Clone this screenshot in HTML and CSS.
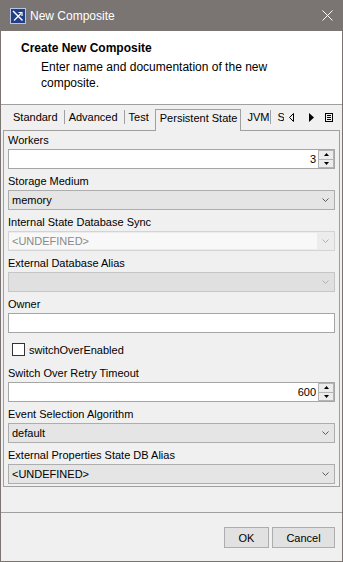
FILE: index.html
```html
<!DOCTYPE html>
<html lang="en">
  <head>
    <meta charset="UTF-8" />
    <meta name="viewport" content="width=device-width, initial-scale=1.0" />
    <title>New Composite</title>
    <link rel="stylesheet" href="styles.css">
  </head>
  <body>
    <div class="window">
      <div class="titlebar">
        <svg class="app-icon" width="16" height="16" viewBox="0 0 16 16">
          <rect x="0.5" y="0.5" width="15" height="15" fill="#213f86" stroke="#b9c5e2" />
          <path d="M3 3L12.5 12.5" stroke="#fff" stroke-width="1.4" />
          <path d="M4 12.5L11 5.5" stroke="#fff" stroke-width="1.2" />
          <path d="M8.5 4.5H12V8" fill="none" stroke="#fff" stroke-width="1.2" />
        </svg>
        <span class="title">New Composite</span>
        <svg class="close" width="11" height="11" viewBox="0 0 11 11">
          <path d="M0.5 0.5L10.5 10.5M10.5 0.5L0.5 10.5" stroke="#fff" stroke-width="1" />
        </svg>
      </div>

      <div class="header">
        <h1>Create New Composite</h1>
        <p>Enter name and documentation of the new composite.</p>
      </div>

      <div class="content">
        <div class="tabs">
          <div class="tab-list">
            <span class="tab">Standard</span>
            <span class="sep"></span>
            <span class="tab">Advanced</span>
            <span class="sep"></span>
            <span class="tab">Test</span>
            <span class="tab selected">Persistent State</span>
            <span class="tab tab-jvm">JVM</span>
            <span class="sep"></span>
            <span class="tab tab-cut">S</span>
          </div>
          <div class="tab-controls">
            <svg width="5" height="9" viewBox="0 0 5 9">
              <path d="M4.5 0.5V8.5L0.5 4.5Z" fill="none" stroke="#000" />
            </svg>
            <svg class="next" width="5" height="9" viewBox="0 0 5 9">
              <path d="M0 0V9L5 4.5Z" fill="#000" />
            </svg>
            <svg class="menu" width="8" height="9" viewBox="0 0 8 9">
              <rect x="0.5" y="0.5" width="7" height="8" fill="none" stroke="#000" />
              <path d="M2 2.5H6M2 4.5H6M2 6.5H6" stroke="#000" />
            </svg>
          </div>
        </div>

        <div class="panel">
          <div class="field">
            <label>Workers</label>
            <div class="spin">
              <span class="value">3</span>
              <div class="spin-buttons">
                <span class="spin-btn"><svg width="5" height="3" viewBox="0 0 5 3"><path d="M0 3H5L2.5 0Z" /></svg></span>
                <span class="spin-btn"><svg width="5" height="3" viewBox="0 0 5 3"><path d="M0 0H5L2.5 3Z" /></svg></span>
              </div>
            </div>
          </div>

          <div class="field">
            <label>Storage Medium</label>
            <div class="combo">
              <span class="combo-text">memory</span>
              <span class="arrow"><svg width="7" height="4" viewBox="0 0 7 4"><path d="M0.5 0.5L3.5 3.5L6.5 0.5" /></svg></span>
            </div>
          </div>

          <div class="field">
            <label>Internal State Database Sync</label>
            <div class="combo disabled">
              <span class="combo-text">&lt;UNDEFINED&gt;</span>
              <span class="arrow"><svg width="7" height="4" viewBox="0 0 7 4"><path d="M0.5 0.5L3.5 3.5L6.5 0.5" /></svg></span>
            </div>
          </div>

          <div class="field">
            <label>External Database Alias</label>
            <div class="combo empty">
              <span class="combo-text"></span>
              <span class="arrow"><svg width="7" height="4" viewBox="0 0 7 4"><path d="M0.5 0.5L3.5 3.5L6.5 0.5" /></svg></span>
            </div>
          </div>

          <div class="field">
            <label>Owner</label>
            <div class="text-input"></div>
          </div>

          <div class="check-row">
            <span class="checkbox"></span>
            <span>switchOverEnabled</span>
          </div>

          <div class="field">
            <label>Switch Over Retry Timeout</label>
            <div class="spin">
              <span class="value">600</span>
              <div class="spin-buttons">
                <span class="spin-btn"><svg width="5" height="3" viewBox="0 0 5 3"><path d="M0 3H5L2.5 0Z" /></svg></span>
                <span class="spin-btn"><svg width="5" height="3" viewBox="0 0 5 3"><path d="M0 0H5L2.5 3Z" /></svg></span>
              </div>
            </div>
          </div>

          <div class="field">
            <label>Event Selection Algorithm</label>
            <div class="combo">
              <span class="combo-text">default</span>
              <span class="arrow"><svg width="7" height="4" viewBox="0 0 7 4"><path d="M0.5 0.5L3.5 3.5L6.5 0.5" /></svg></span>
            </div>
          </div>

          <div class="field">
            <label>External Properties State DB Alias</label>
            <div class="combo">
              <span class="combo-text">&lt;UNDEFINED&gt;</span>
              <span class="arrow"><svg width="7" height="4" viewBox="0 0 7 4"><path d="M0.5 0.5L3.5 3.5L6.5 0.5" /></svg></span>
            </div>
          </div>
        </div>
      </div>

      <div class="footer">
        <button class="button ok">OK</button>
        <button class="button cancel">Cancel</button>
      </div>
    </div>
  </body>
</html>
```

FILE: styles.css
```css
:root {
  --frame: #7a7473;
  --line: #a0a0a0;
  --face: #f0f0f0;
  --field-border: #a6a6a6;
  --combo-bg: #e5e5e5;
  --combo-border: #adadad;
}

* {
  box-sizing: border-box;
}

body {
  margin: 0;
  font-family: "Liberation Sans", Arial, sans-serif;
  font-size: 11px;
  color: #000;
  background: #fff;
}

.window {
  width: 343px;
  height: 562px;
  border: 1px solid var(--frame);
  border-top: 0;
  background: var(--face);
  display: flex;
  flex-direction: column;
}

/* title bar */
.titlebar {
  height: 31px;
  flex-shrink: 0;
  background: var(--frame);
  color: #fff;
  font-size: 12px;
  display: flex;
  align-items: center;
  padding: 0 9px;
}

.app-icon {
  margin-right: 4px;
}

.title {
  flex: 1;
}

/* header */
.header {
  background: #fff;
  padding: 9px 40px 13px 20px;
  border-bottom: 1px solid var(--line);
  flex-shrink: 0;
}

.header h1 {
  margin: 0;
  font-size: 12px;
  font-weight: bold;
  line-height: 16px;
}

.header p {
  margin: 3px 0 0 20px;
  font-size: 12px;
  line-height: 16px;
}

/* tabs */
.content {
  flex: 1;
  padding: 4px 2px 0;
}

.tabs {
  display: flex;
  height: 21px;
}

.tab-list {
  flex: 1;
  display: flex;
  align-items: flex-start;
  padding-left: 6px;
}

.tab {
  line-height: 16px;
  padding: 0 6px 0 4px;
  white-space: nowrap;
}

.sep {
  width: 1px;
  height: 14px;
  margin-top: 1px;
  background: var(--line);
}

.tab.selected {
  height: 22px;
  margin-bottom: -1px;
  padding: 0 3px 0 4px;
  border: 1px solid var(--line);
  border-bottom: 0;
  background: var(--face);
}

.tab.tab-jvm {
  padding: 0 1px 0 6px;
}

.tab.tab-cut {
  width: 13px;
  overflow: hidden;
  padding-left: 6px;
  padding-right: 0;
}

.tab-controls {
  display: flex;
  align-items: flex-start;
  padding: 4px 7px 0 0;
}

.tab-controls .next {
  margin-left: 15px;
}

.tab-controls .menu {
  margin-left: 11px;
}

/* panel */
.panel {
  border: 1px solid var(--line);
  padding: 2px 4px 2px;
  display: flex;
  flex-direction: column;
  gap: 5px;
}

.field label {
  display: block;
  line-height: 14px;
  margin-bottom: 2px;
}

.text-input {
  height: 20px;
  background: #fff;
  border: 1px solid var(--field-border);
}

.spin {
  height: 20px;
  display: flex;
  background: #fff;
  border: 1px solid var(--field-border);
}

.spin .value {
  flex: 1;
  text-align: right;
  line-height: 18px;
  padding-right: 2px;
}

.spin-buttons {
  width: 16px;
  display: flex;
  flex-direction: column;
}

.spin-btn {
  flex: 1;
  display: flex;
  align-items: center;
  justify-content: center;
  background: #ececec;
  border: 1px solid #b4b4b4;
}

.spin-btn + .spin-btn {
  border-top: 0;
}

.spin-btn svg {
  fill: #000;
}

.combo {
  height: 20px;
  display: flex;
  align-items: center;
  background: var(--combo-bg);
  border: 1px solid var(--combo-border);
}

.combo-text {
  flex: 1;
  padding-left: 3px;
  line-height: 18px;
}

.arrow {
  width: 17px;
  display: flex;
  justify-content: center;
}

.arrow svg {
  fill: none;
  stroke: #5a5a5a;
  stroke-width: 1;
}

.combo.disabled {
  background: #ececec;
  border-color: #d4d4d4;
}

.combo.disabled .combo-text {
  background: #f8f8f8;
  color: #8a8a8a;
  height: 16px;
  line-height: 16px;
}

.combo.disabled .arrow svg,
.combo.empty .arrow svg {
  stroke: #b0b0b0;
}

.combo.empty {
  background: #e0e0e0;
  border-color: #c6c6c6;
}

.check-row {
  height: 23px;
  display: flex;
  align-items: center;
  padding-left: 4px;
}

.checkbox {
  width: 13px;
  height: 13px;
  border: 1px solid #333;
  background: #fff;
  margin-right: 4px;
}

/* footer */
.footer {
  height: 49px;
  flex-shrink: 0;
  border-top: 1px solid var(--line);
  display: flex;
  justify-content: flex-end;
  align-items: flex-start;
  gap: 3px;
  padding: 14px 7px 0 0;
}

.button {
  height: 21px;
  font-family: inherit;
  font-size: 11px;
  color: #000;
  background: #e1e1e1;
  border: 1px solid #adadad;
  padding: 0;
}

.button.ok {
  width: 45px;
}

.button.cancel {
  width: 63px;
}
```
